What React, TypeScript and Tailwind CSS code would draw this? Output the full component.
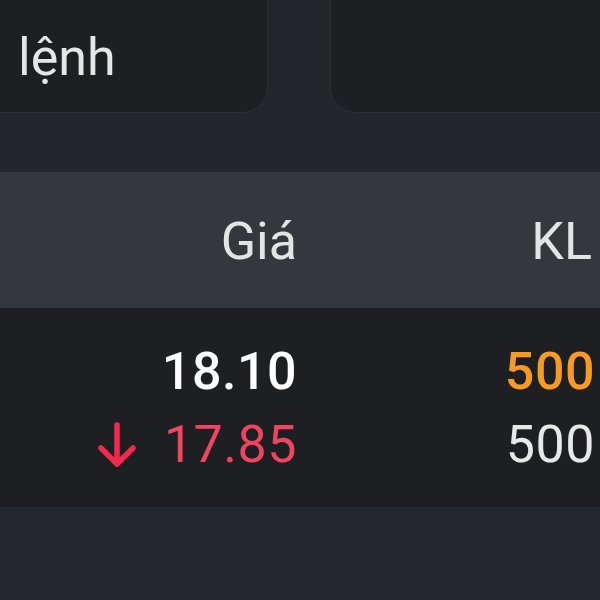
const font = { fontFamily: "Roboto, 'Noto Sans', sans-serif" };

function DownArrow() {
  return (
    <svg width="38" height="46" viewBox="0 0 38 46" fill="none" className="shrink-0">
      <path d="M19 3 V42 M3 26 L19 42 L35 26" stroke="#f2294f" strokeWidth="5.5" strokeLinecap="round" strokeLinejoin="round" />
    </svg>
  );
}

export default function App() {
  return (
    <div className="w-[600px] h-[600px] overflow-hidden bg-[#23272b] flex flex-col" style={font}>
      <div className="flex gap-[62px] h-[113px] items-end shrink-0">
        <div className="-ml-[40px] w-[308px] h-[150px] shrink-0 rounded-[26px] bg-[#1d1f22] border border-[#2b2f33] flex items-end pb-[28px] pl-[57px]">
          <span className="text-[52px] leading-none text-[#e6e6e6]">lệnh</span>
        </div>
        <div className="w-[320px] h-[150px] shrink-0 rounded-[26px] bg-[#1d1f22] border border-[#2b2f33]" />
      </div>

      <div className="h-[59px] shrink-0" />

      <div className="h-[136px] shrink-0 bg-[#34383d] flex items-center pt-[4px] text-[52px] leading-none text-[#e4e4e4]">
        <div className="w-[297px] text-right">Giá</div>
        <div className="flex-1 text-right pr-[8px]">KL</div>
      </div>

      <div className="h-[199px] shrink-0 bg-[#1d1f22] flex flex-col justify-center gap-[15px] pt-[2px] text-[52px] leading-[58px] tracking-[0.5px]">
        <div className="flex items-center">
          <div className="w-[297px] text-right font-medium text-white">18.10</div>
          <div className="flex-1 text-right pr-[5px] font-medium text-[#f59a23]">500</div>
        </div>
        <div className="flex items-center">
          <div className="w-[297px] flex justify-end items-center gap-[28px] text-[#ef4560]">
            <DownArrow />
            <span>17.85</span>
          </div>
          <div className="flex-1 text-right pr-[5px] text-[#e8e8e8]">500</div>
        </div>
      </div>

      <div className="flex-1 bg-[#24282c]" />
    </div>
  );
}
